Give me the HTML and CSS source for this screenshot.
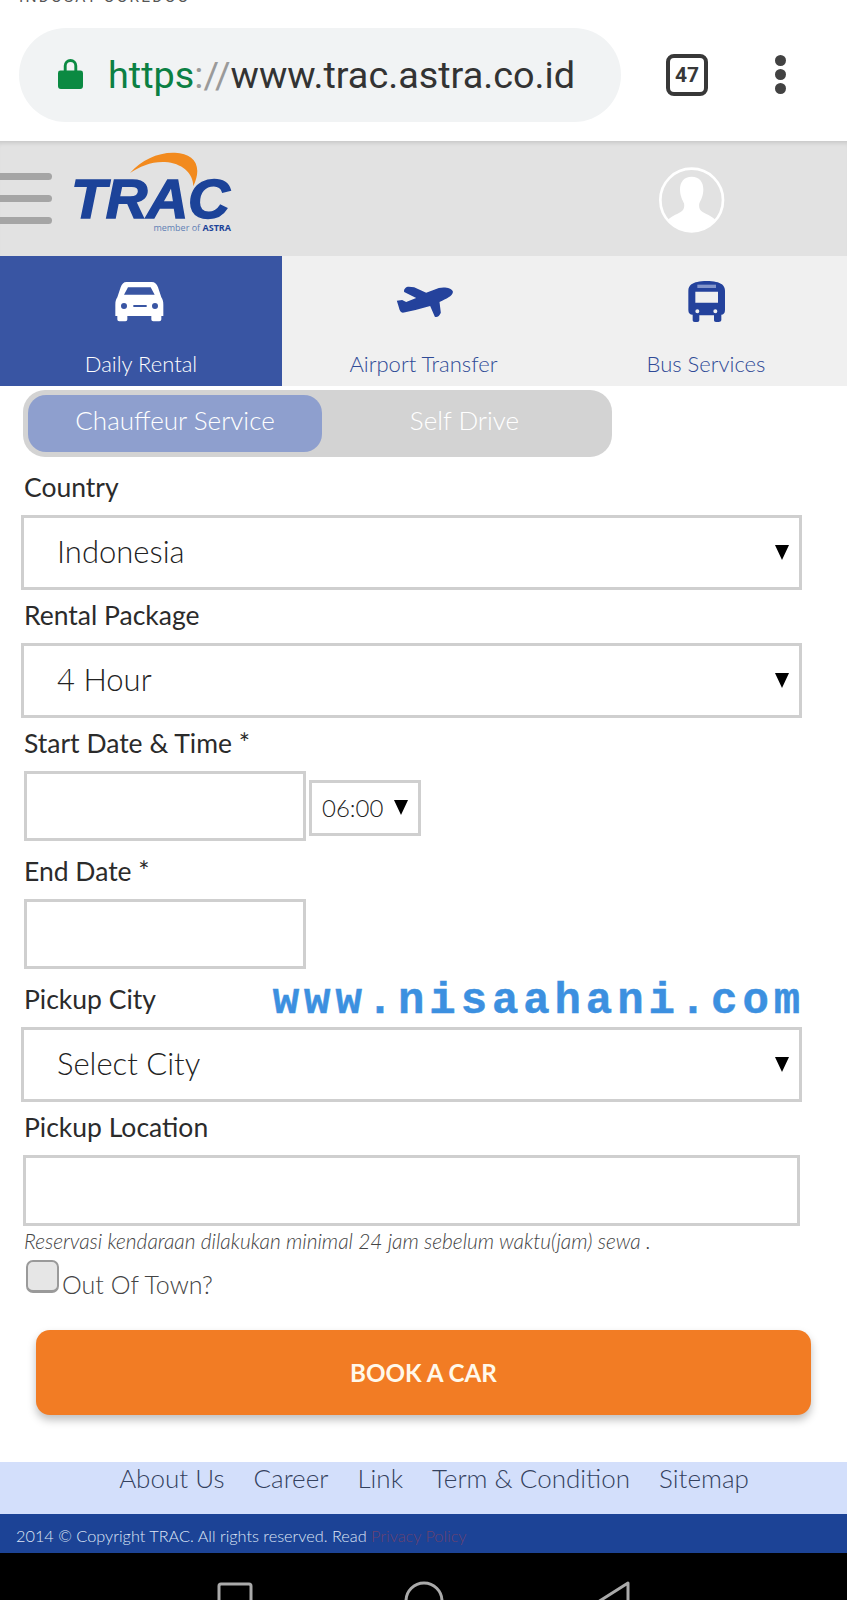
FILE: index.html
```html
<!DOCTYPE html>
<html lang="id">
<head>
  <meta charset="UTF-8">
  <title>TRAC Astra</title>
  <link rel="stylesheet" href="styles.css">
</head>
<body>

<div class="status-bar"><span>INDOSAT OOREDOO</span></div>

<div class="browser-bar">
  <div class="url-pill">
    <svg class="lock" viewBox="0 0 26 32"><path d="M6 13V8a7 7 0 0 1 14 0V13h3.500a2.500 2.500 0 0 1 2.500 2.500V29a3 3 0 0 1-3 3H3a3 3 0 0 1-3-3V15.500A2.500 2.500 0 0 1 2.500 13zM9 13h8V8a4 4 0 0 0-8 0z" fill="#0b8a42"/></svg>
    <span class="url"><span class="url-https">https</span><span class="url-sep">://</span>www.trac.astra.co.id</span>
  </div>
  <div class="tab-count">47</div>
  <div class="menu-dots"><i></i><i></i><i></i></div>
</div>

<header class="site-header">
  <div class="burger"><i></i><i></i><i></i></div>
  <div class="logo">
    <div class="logo-name">TRAC</div>
    <svg class="logo-arc" viewBox="195 22 216 108"><path d="M195 85C230 45 280 22 330 24C385 26 415 60 385 125C385 85 350 55 300 52C260 50 225 65 195 85z" fill="#f28a1e"/></svg>
    <div class="logo-sub">member of <b>ASTRA</b></div>
  </div>
  <svg class="avatar" viewBox="0 0 255 240">
    <circle cx="125" cy="120" r="94" fill="#e2e2e2" stroke="#fff" stroke-width="8"/>
    <path d="M125 50C148 50 160 66 160 88C160 108 152 122 148 130C146 142 148 150 158 156C172 164 188 170 196 180A94 94 0 0 1 54 180C62 170 78 164 92 156C102 150 104 142 102 130C98 122 90 108 90 88C90 66 102 50 125 50z" fill="#fff"/>
  </svg>
</header>

<nav class="tabs">
  <a class="tab active">
    <svg class="tab-icon" viewBox="3 0 240 180"><path d="M80 36H155C165 36 170 42 174 52L184 82C188 88 190 94 190 104V138H184V148C184 152 181 154 178 154H160C156 154 154 152 154 148V138H82V148C82 152 80 154 76 154H58C54 154 52 152 52 148V138H46V104C46 94 48 88 52 82L62 52C66 42 70 36 80 36zM84 52L72 74H164L152 52zM72 99a9 9 0 1 0 0 18a9 9 0 0 0 0-18zM165 99a9 9 0 1 0 0 18a9 9 0 0 0 0-18zM100 105v6h40v-6z" fill="#fff" fill-rule="evenodd"/></svg>
    <span>Daily Rental</span>
  </a>
  <a class="tab">
    <svg class="tab-icon" viewBox="-4.500 0 240 180"><path d="M34 92L50 90L62 96L92 84L56 66C54 56 62 50 70 50L86 52L122 68L160 54C178 50 198 54 202 64C204 74 190 84 170 92L162 96L166 128C162 138 154 144 148 140L134 108L90 120L52 128C46 128 42 122 40 112z" fill="#24429c"/></svg>
    <span>Airport Transfer</span>
  </a>
  <a class="tab">
    <svg class="tab-icon" viewBox="-12 0 240 180"><path d="M82 36C96 32 124 32 138 36C152 38 165 46 165 62V120C165 130 160 134 154 134V150C154 154 150 156 146 156H138C134 156 132 154 132 150V136H88V150C88 154 86 156 82 156H74C70 156 68 154 68 150V134C60 134 55 130 55 120V62C55 46 68 38 82 36zM76 65V98H144V65zM82 118a6 6 0 1 0 0 12a6 6 0 0 0 0-12zM136 118a6 6 0 1 0 0 12a6 6 0 0 0 0-12z" fill="#24429c" fill-rule="evenodd"/><rect x="82" y="44" width="56" height="10" fill="#8496cc"/></svg>
    <span>Bus Services</span>
  </a>
</nav>

<div class="service-switch">
  <div class="switch-item on">Chauffeur Service</div>
  <div class="switch-item">Self Drive</div>
</div>

<form class="booking">
  <label>Country</label>
  <div class="select-wrap">
    <select><option>Indonesia</option></select>
  </div>

  <label>Rental Package</label>
  <div class="select-wrap">
    <select><option>4 Hour</option></select>
  </div>

  <label>Start Date &amp; Time *</label>
  <div class="date-row">
    <input type="text" class="date-input">
    <div class="select-wrap time-wrap">
      <select><option>06:00</option></select>
    </div>
  </div>

  <label>End Date *</label>
  <div class="date-row">
    <input type="text" class="date-input">
  </div>

  <div class="label-row">
    <label>Pickup City</label>
    <span class="watermark">www.nisaahani.com</span>
  </div>
  <div class="select-wrap">
    <select><option>Select City</option></select>
  </div>

  <label>Pickup Location</label>
  <input type="text" class="location-input">
  <p class="hint">Reservasi kendaraan dilakukan minimal 24 jam sebelum waktu(jam) sewa .</p>

  <div class="town-row">
    <input type="checkbox" id="town">
    <label for="town">Out Of Town?</label>
  </div>

  <button type="button" class="book-btn">BOOK A CAR</button>
</form>

<div class="footer-links">
  <a>About Us</a>
  <a>Career</a>
  <a>Link</a>
  <a>Term &amp; Condition</a>
  <a>Sitemap</a>
</div>

<div class="copyright">2014 © Copyright TRAC. All rights reserved. Read <a>Privacy Policy</a></div>

<div class="android-nav">
  <svg width="36" height="20" viewBox="0 0 36 20"><rect x="2" y="4" width="32" height="30" rx="2" fill="none" stroke="#aaa" stroke-width="3"/></svg>
  <svg width="40" height="20" viewBox="0 0 40 20"><circle cx="20" cy="21" r="18" fill="none" stroke="#aaa" stroke-width="3"/></svg>
  <svg width="36" height="20" viewBox="0 0 36 20"><path d="M33 3L3 22v10l30 15z" fill="none" stroke="#aaa" stroke-width="3" stroke-linejoin="round"/></svg>
</div>

</body>
</html>
```

FILE: styles.css
```css
* {
  box-sizing: border-box;
}

html, body {
  height: 1600px;
  overflow: hidden;
}

body {
  margin: 0;
  font-family: 'Lato', sans-serif;
  background-color: #ffffff;
  color: #2b2b2b;
}

.status-bar {
  height: 4px;
  padding-left: 19px;
  overflow: hidden;
  font-family: 'Roboto', sans-serif;
  font-size: 15.500px;
  line-height: 4px;
  letter-spacing: 2.200px;
  color: #555;
}

.status-bar span {
  display: block;
  margin-top: -5px;
}

/* browser chrome */
.browser-bar {
  display: flex;
  align-items: center;
  height: 137px;
  padding: 24px 0 20px 19px;
}

.url-pill {
  display: flex;
  align-items: center;
  width: 602px;
  height: 94px;
  padding-left: 39px;
  background: #f1f3f4;
  border-radius: 47px;
}

.lock {
  width: 25px;
  height: 33px;
  margin: -3px 25px 0 0;
}

.url {
  font-family: 'Roboto', sans-serif;
  font-size: 37.800px;
  color: #333;
  white-space: nowrap;
}

.url-https {
  color: #0b8043;
}

.url-sep {
  color: #9a9a9a;
}

.tab-count {
  width: 42px;
  height: 42px;
  margin-left: 45px;
  border: 4px solid #383838;
  border-radius: 8px;
  font-family: 'Roboto', sans-serif;
  font-size: 21px;
  font-weight: 700;
  line-height: 34px;
  text-align: center;
  color: #383838;
}

.menu-dots {
  display: flex;
  flex-direction: column;
  gap: 3px;
  margin-left: 67px;
}

.menu-dots i {
  width: 11px;
  height: 11px;
  border-radius: 50%;
  background: #424242;
}

/* site header */
.site-header {
  display: flex;
  align-items: flex-start;
  height: 115px;
  background: #e2e2e2;
  box-shadow: inset 0 5px 4px -3px rgba(0, 0, 0, 0.12);
}

.burger {
  display: flex;
  flex-direction: column;
  gap: 15px;
  width: 52px;
  margin-top: 32px;
}

.burger i {
  height: 7px;
  background: #a5a5a5;
  border-radius: 0 4px 4px 0;
}

.logo {
  position: relative;
  width: 160px;
  margin: 10px 0 0 21px;
  padding-top: 24px;
}

.logo-arc {
  position: absolute;
  top: 1px;
  left: 57px;
  width: 72px;
  height: 36px;
}

.logo-name {
  margin-left: -2px;
  font-family: 'Liberation Sans', sans-serif;
  font-size: 56px;
  font-weight: 700;
  font-style: italic;
  line-height: 48px;
  letter-spacing: -0.500px;
  -webkit-text-stroke: 1.500px #1c4399;
  transform: scaleX(1.03);
  transform-origin: left;
  color: #1c4399;
}

.logo-sub {
  padding-right: 2px;
  font-family: 'Open Sans', sans-serif;
  font-size: 9px;
  line-height: 10px;
  text-align: right;
  color: #5f7fb5;
}

.logo-sub b {
  color: #1c4399;
}

.avatar {
  width: 85px;
  height: 80px;
  margin: 19px 0 0 417px;
}

/* tabs */
.tabs {
  display: grid;
  grid-template-columns: 282px 283px 282px;
  height: 130px;
  background: #f0f0f0;
}

.tab {
  display: flex;
  flex-direction: column;
  align-items: center;
  font-size: 22px;
  font-weight: 300;
  line-height: 28px;
  color: #2f4a96;
}

.tab.active {
  background: #3955a3;
  color: #ffffff;
}

.tab-icon {
  width: 80px;
  height: 60px;
  margin: 14px 0 20px;
  filter: blur(0.5px);
}

/* chauffeur / self drive */
.service-switch {
  display: flex;
  width: 589px;
  height: 67px;
  margin: 4px 0 0 23px;
  padding: 5px;
  background: #d3d3d3;
  border-radius: 22px;
}

.switch-item {
  width: 285px;
  font-size: 26px;
  font-weight: 300;
  line-height: 51px;
  text-align: center;
  color: #ffffff;
}

.switch-item.on {
  width: 294px;
  background: #8e9fce;
  border-radius: 18px;
}

/* form */
.booking {
  padding: 5px 0 0 21px;
}

.booking label {
  display: block;
  height: 53px;
  padding-left: 3px;
  font-size: 26.500px;
  line-height: 51px;
  color: #2b2b2b;
}

.label-row {
  display: flex;
  align-items: center;
  justify-content: space-between;
  width: 784px;
  height: 53px;
}

.watermark {
  font-family: 'Liberation Mono', monospace;
  font-size: 44px;
  font-weight: 700;
  letter-spacing: 4.900px;
  -webkit-text-stroke: 0.500px #3c90e0;
  color: #3c90e0;
}

.select-wrap {
  position: relative;
  width: 781px;
  height: 75px;
}

.select-wrap::after {
  content: "";
  position: absolute;
  top: 30px;
  right: 13px;
  border-left: 7px solid transparent;
  border-right: 7px solid transparent;
  border-top: 15px solid #000;
}

select {
  appearance: none;
  width: 100%;
  height: 100%;
  padding: 0 0 4px 33px;
  border: 3px solid #cfcfcf;
  border-radius: 0;
  background: #fff;
  font-family: 'Lato', sans-serif;
  font-size: 31px;
  font-weight: 300;
  color: #222;
}

.date-row {
  display: flex;
  align-items: center;
  height: 70px;
  margin-bottom: 5px;
  padding-left: 3px;
}

.date-input {
  width: 282px;
  height: 70px;
  border: 3px solid #cfcfcf;
}

.time-wrap {
  width: 112px;
  height: 56px;
  margin: 4px 0 0 3px;
}

.time-wrap select {
  padding: 0 0 2px 10px;
  font-size: 24px;
}

.time-wrap::after {
  top: 20px;
  right: 13px;
}

.location-input {
  display: block;
  width: 777px;
  height: 71px;
  margin-left: 2px;
  border: 3px solid #cfcfcf;
}

.hint {
  height: 34px;
  margin: 0;
  padding-left: 3px;
  font-size: 20.900px;
  font-weight: 300;
  font-style: italic;
  line-height: 30px;
  white-space: nowrap;
  color: #444;
}

.town-row {
  display: flex;
  align-items: flex-start;
  padding-left: 5px;
}

.town-row input {
  appearance: none;
  width: 33px;
  height: 33px;
  margin: 0;
  background: #e6e6e6;
  border: 2px solid #9a9a9a;
  border-bottom-width: 3px;
  border-radius: 7px;
}

.booking .town-row label {
  height: 40px;
  margin-top: 4px;
  padding-left: 3px;
  font-size: 25px;
  font-weight: 300;
  line-height: 40px;
  color: #444;
}

.book-btn {
  display: block;
  width: 775px;
  height: 85px;
  margin: 26px 0 47px 15px;
  padding-bottom: 2px;
  border: none;
  border-radius: 14px;
  background: #f27c24;
  box-shadow: 0 5px 9px rgba(0, 0, 0, 0.25);
  font-family: 'Lato', sans-serif;
  font-size: 24.200px;
  font-weight: 700;
  color: #fff8ea;
}

/* footer */
.footer-links {
  display: flex;
  justify-content: center;
  gap: 29px;
  height: 52px;
  padding-left: 21px;
  background: #d3dffb;
  font-size: 26px;
  font-weight: 300;
  line-height: 33px;
  color: #33415e;
}

.copyright {
  height: 39px;
  padding-left: 16px;
  background: #1c4396;
  font-size: 16.300px;
  font-weight: 300;
  line-height: 44px;
  color: #dfe6f5;
}

.copyright a {
  color: #6b4270;
}

.android-nav {
  display: flex;
  align-items: flex-start;
  gap: 151px;
  height: 47px;
  padding: 27px 0 0 217px;
  background: #000;
  overflow: hidden;
}
```
